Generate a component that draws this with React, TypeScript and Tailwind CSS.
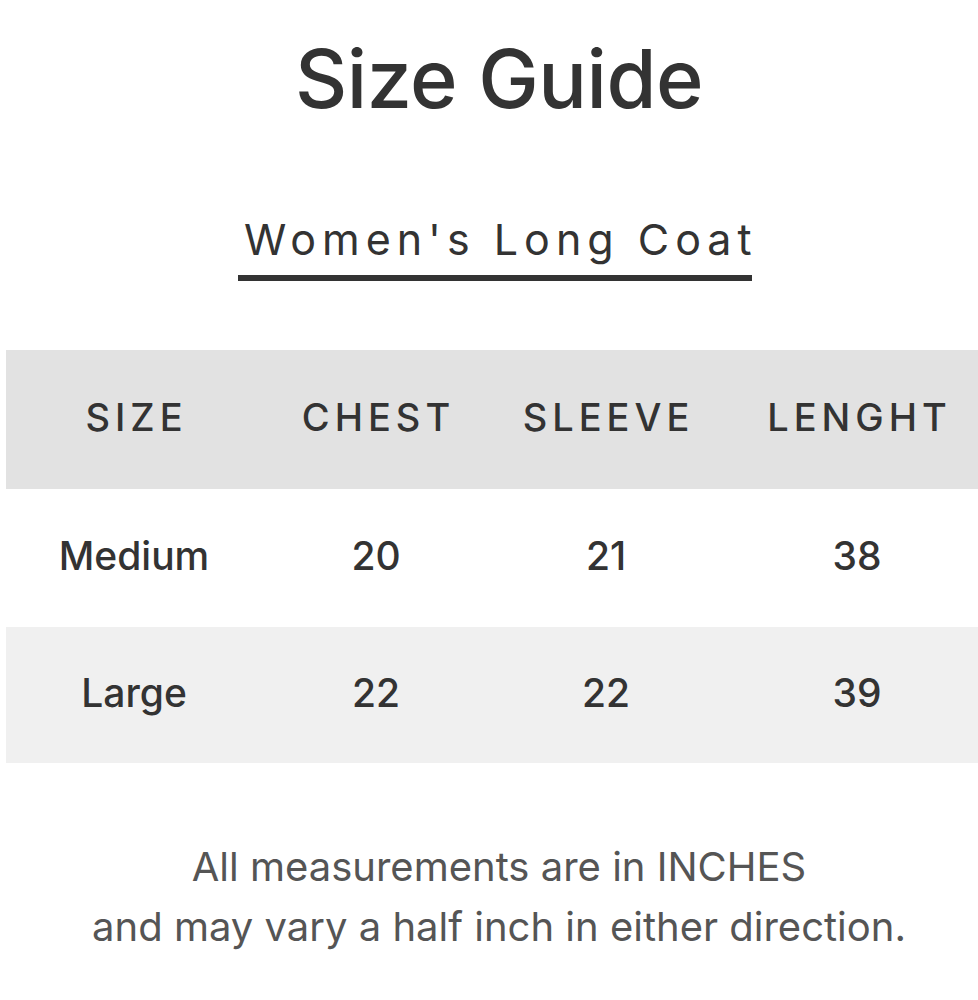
import React from 'react';

const rows = [
    { size: 'Medium', chest: '20', sleeve: '21', length: '38' },
    { size: 'Large', chest: '22', sleeve: '22', length: '39' },
];

const cols = 'grid grid-cols-[256px_228px_232px_270px] items-center text-center';

export default function App() {
    return (
        <div className="w-full h-[1000px] bg-white overflow-hidden font-['Inter',sans-serif] text-[#333]">
            <div className="pl-[20px]">
                <h1 className="pt-[39px] text-center text-[81px] leading-[80px] font-medium tracking-[-0.5px]">Size Guide</h1>

                <div className="mt-[96px] flex justify-center">
                    <div className="w-[514px] -translate-x-[4px] border-b-[6px] border-[#333] pb-[12px] pl-[6px] text-center whitespace-nowrap">
                        <span className="text-[43px] leading-[48px] font-normal tracking-[6px]">Women's Long Coat</span>
                    </div>
                </div>
            </div>

            <div className="mt-[69px] ml-[6px] w-[986px]">
                <div className={`${cols} h-[139px] bg-[#e2e2e2] pb-[4px]`}>
                    <div className="text-[38px] font-medium tracking-[5px] pl-[5px]">SIZE</div>
                    <div className="text-[38px] font-medium tracking-[5px] pl-[5px]">CHEST</div>
                    <div className="text-[38px] font-medium tracking-[5px] pl-[5px]">SLEEVE</div>
                    <div className="text-[38px] font-medium tracking-[5px] pl-[5px]">LENGHT</div>
                </div>
                {rows.map((r, i) => (
                    <div key={r.size} className={`${cols} ${i === 0 ? 'h-[138px] bg-white' : 'h-[136px] bg-[#f0f0f0]'} text-[39px] font-medium pb-[4px]`}>
                        <div>{r.size}</div>
                        <div>{r.chest}</div>
                        <div>{r.sleeve}</div>
                        <div>{r.length}</div>
                    </div>
                ))}
            </div>

            <div className="pl-[20px] mt-[74px] text-center text-[40px] leading-[60px] text-[#555]">
                <p>All measurements are in INCHES</p>
                <p>and may vary a half inch in either direction.</p>
            </div>
        </div>
    );
}
